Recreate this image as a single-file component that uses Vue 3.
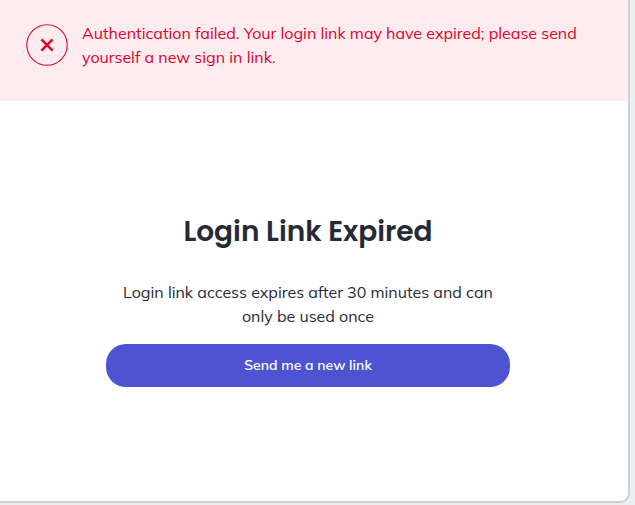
<script setup>
import { ref } from 'vue'

const error = ref('Authentication failed. Your login link may have expired; please send yourself a new sign in link.')
</script>

<template>
  <div class="page">
    <main class="card">
      <div class="alert" role="alert">
        <svg class="alert-icon" viewBox="0 0 42 42" aria-hidden="true">
          <circle cx="21" cy="21" r="20.2" fill="none" stroke="currentColor" stroke-width="1.1" />
          <path d="M15.4 15.4 26.6 26.6M26.6 15.4 15.4 26.6" fill="none" stroke="currentColor" stroke-width="2.5" />
        </svg>
        <p class="alert-text">{{ error }}</p>
      </div>
      <section class="content">
        <h1 class="title">Login Link Expired</h1>
        <p class="message">Login link access expires after 30 minutes and can only be used once</p>
        <button class="send" type="button">Send me a new link</button>
      </section>
    </main>
  </div>
</template>

<style>
body {
  background: #ebeff2;
}
</style>

<style scoped>
.page {
  box-sizing: border-box;
  min-height: 100vh;
  display: flex;
  padding: 0 5px 2px 0;
  font-family: Muli, Mulish, "Open Sans", "Noto Sans", sans-serif;
  font-size: 16px;
  line-height: 24px;
}
.card {
  flex: 1;
  display: flex;
  flex-direction: column;
  background: #fff;
  border: solid #ced1d3;
  border-width: 0 2px 2px 0;
  border-radius: 0 0 10px 0;
}
.alert {
  display: flex;
  align-items: flex-start;
  gap: 14px;
  padding: 21px 40px 32px 26px;
  background: #fdecef;
  color: #e0002d;
}
.alert-icon {
  flex: none;
  width: 42px;
  height: 42px;
  margin-top: 3px;
}
.alert-text {
  margin: 0;
  font-weight: 400;
}
.content {
  display: flex;
  flex-direction: column;
  align-items: center;
  padding: 113px 12px 40px 0;
  color: #262a36;
  text-align: center;
}
.title {
  margin: 0;
  font-family: Poppins, Inter, sans-serif;
  font-size: 28px;
  line-height: 36px;
  font-weight: 600;
}
.message {
  max-width: 404px;
  margin: 30px 0 16px;
  font-weight: 400;
}
.send {
  width: 100%;
  max-width: 404px;
  height: 43px;
  padding: 0 16px 2px;
  border: 0;
  border-radius: 20px;
  background: #4d53d1;
  color: #fff;
  font: inherit;
  font-size: 14px;
  font-weight: 600;
  cursor: pointer;
}
</style>
